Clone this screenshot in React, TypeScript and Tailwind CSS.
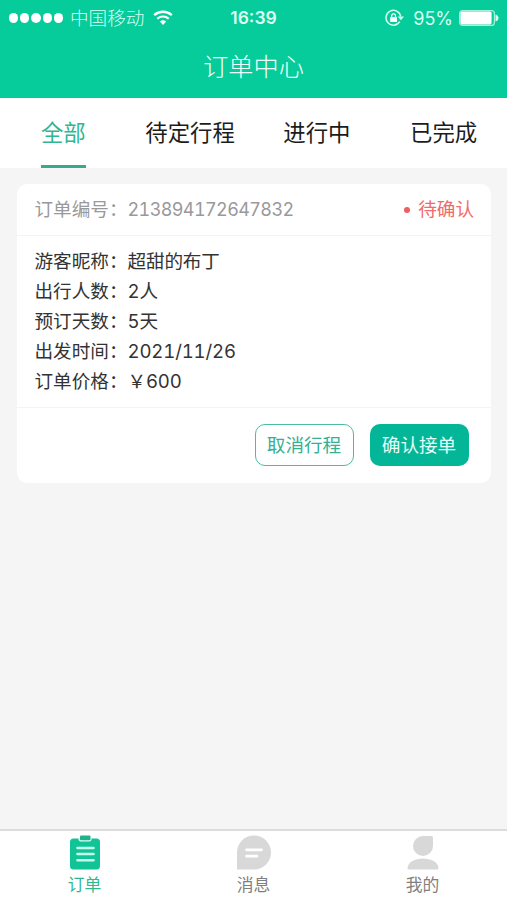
import clsx from "clsx";

const tabs = ["全部", "待定行程", "进行中", "已完成"];

const details = [
  { label: "游客昵称", value: "超甜的布丁" },
  { label: "出行人数", value: "2人" },
  { label: "预订天数", value: "5天" },
  { label: "出发时间", value: "2021/11/26" },
  { label: "订单价格", value: "￥600" },
];

function StatusBar() {
  return (
    <div className="grid h-9 grid-cols-3 items-center text-[#d9fff2]">
      <div className="flex items-center pl-[9px]">
        <div className="flex gap-[2px]">
          {[0, 1, 2, 3, 4].map((i) => (
            <span key={i} className="size-[9.2px] rounded-full bg-white" />
          ))}
        </div>
        <span className="ml-[7px] text-[18.6px] leading-9 font-light whitespace-nowrap">
          中国移动
        </span>
        <svg className="ml-[9px] shrink-0" width="20" height="16" viewBox="0 0 20 16" fill="none">
          <path d="M1.2 5.2a13 13 0 0 1 17.6 0" stroke="white" strokeWidth="2.3" />
          <path d="M4.3 8.7a8.5 8.5 0 0 1 11.4 0" stroke="white" strokeWidth="2.2" />
          <path d="M6.8 11.6a4.8 4.8 0 0 1 6.4 0L10 15z" fill="white" />
        </svg>
      </div>
      <div className="text-center text-[17.5px] font-semibold">16:39</div>
      <div className="flex items-center justify-end pr-[8px]">
        <svg width="19" height="18" viewBox="0 0 19 18" fill="none">
          <path d="M14.7 12.7A7.4 7.4 0 1 1 15.7 7.4" stroke="currentColor" strokeWidth="1.5" />
          <path d="M12.7 7.6H19l-3.1 3.7z" fill="currentColor" />
          <rect x="5.2" y="8" width="6.8" height="5" rx=".6" fill="white" />
          <path d="M6.7 8.2V6.7a1.9 1.9 0 0 1 3.8 0v1.5" stroke="white" strokeWidth="1.2" />
        </svg>
        <span className="ml-[9px] text-[18px]">95%</span>
        <svg className="ml-[6px]" width="40" height="16" viewBox="0 0 40 16" fill="none">
          <rect x=".6" y=".6" width="34.8" height="14.8" rx="3" stroke="#a5f0d8" strokeWidth="1.2" />
          <rect x="1.4" y="1.6" width="31.2" height="12.8" rx="1.6" fill="white" />
          <path d="M36.5 4.5c4 1 4 6 0 7z" fill="#d9fff2" />
        </svg>
      </div>
    </div>
  );
}

function Tabs() {
  return (
    <nav className="grid h-[70px] grid-cols-4 bg-white text-[22.4px] text-[#1c1c1c]">
      {tabs.map((tab, i) => (
        <button
          key={tab}
          className={clsx(
            "justify-self-center border-b-[3px] pt-[3px] whitespace-nowrap",
            i === 0 ? "border-[#35ab8b] text-[#2fb692]" : "border-transparent",
          )}
        >
          {tab}
        </button>
      ))}
    </nav>
  );
}

function OrderCard() {
  return (
    <section className="mt-4 mr-[16.5px] ml-[17px] h-[299px] rounded-[10px] bg-white text-[18.6px]">
      <header className="flex h-[52px] items-center justify-between border-b border-[#f4f4f4] pt-[2px] pr-[16.5px] pl-[17.5px] text-[#999]">
        <p className="flex items-baseline">
          <span>订单编号：</span>
          <span className="text-[18px] tracking-[-0.6px] tabular-nums">
            213894172647832
          </span>
        </p>
        <p className="flex items-center gap-[8px] text-[#ef6b6b]">
          <span className="size-[6.5px] rounded-full bg-[#ee5d60]" />
          待确认
        </p>
      </header>
      <dl className="h-[172px] border-b border-[#f4f4f4] pt-[10px] pl-[17.5px] leading-[30px] text-[#333] tabular-nums">
        {details.map(({ label, value }) => (
          <div key={label} className="flex">
            <dt>{label}：</dt>
            <dd className="tracking-[-0.15px]">{value}</dd>
          </div>
        ))}
      </dl>
      <footer className="flex justify-end gap-[16px] pt-[16px] pr-[22px]">
        <button className="h-[42px] w-[99px] rounded-[10px] border border-[#4cbca1] pt-[2px] text-[#35b095]">
          取消行程
        </button>
        <button className="h-[42px] w-[99px] rounded-[10px] bg-[#04b698] pt-[2px] text-[#e5fff9]">
          确认接单
        </button>
      </footer>
    </section>
  );
}

function OrderIcon() {
  return (
    <svg width="32" height="36" viewBox="0 0 32 36" fill="none">
      <rect x="1" y="3.5" width="30" height="31" rx="3.5" fill="#10c496" />
      <path d="M9.5 3h13v1.5a2 2 0 0 1-2 2h-9a2 2 0 0 1-2-2z" fill="#d9fff2" />
      <rect x="11" y=".5" width="10.5" height="4.7" rx="1" fill="#1fb38d" />
      <path d="M8.5 13h16M8.5 19h16M8.5 25.2h16" stroke="#c9fff0" strokeWidth="2.6" strokeLinecap="round" />
    </svg>
  );
}

function MessageIcon() {
  return (
    <svg width="34" height="36" viewBox="0 0 34 36" fill="none">
      <path d="M0 34.5v-17A17 17 0 1 1 17 34.5z" fill="#d8d8d8" />
      <path d="M9.5 14.8h15M9.5 21.2H20" stroke="white" strokeWidth="2.7" strokeLinecap="round" />
    </svg>
  );
}

function ProfileIcon() {
  return (
    <svg width="32" height="36" viewBox="0 0 32 36" fill="#d8d8d8">
      <path d="M16 1h8.5q1.5 0 1.5 1.5V11a10 10 0 1 1-10-10z" />
      <path d="M.5 33C1 27 8 23.5 16 23.5S31 27 31.5 33q0 1.5-1.5 1.5H2Q.5 34.5.5 33z" />
    </svg>
  );
}

const navItems = [
  { label: "订单", icon: <OrderIcon />, active: true },
  { label: "消息", icon: <MessageIcon />, active: false },
  { label: "我的", icon: <ProfileIcon />, active: false },
];

export default function App() {
  return (
    <div
      lang="zh-CN"
      className="flex h-[900px] w-[507px] flex-col bg-[#f5f5f5] font-['Inter','Noto_Sans_CJK_SC',sans-serif]"
    >
      <header className="h-[97.5px] bg-[#05cc9a]">
        <StatusBar />
        <h1 className="h-[61px] text-center text-[25.2px] leading-[63px] font-light text-[#f0fffb]">
          订单中心
        </h1>
      </header>
      <Tabs />
      <main className="flex-1">
        <OrderCard />
      </main>
      <nav className="grid h-[71px] grid-cols-3 border-t-2 border-[#dcdcdc] bg-white">
        {navItems.map(({ label, icon, active }) => (
          <button key={label} className="flex flex-col items-center pt-[4px]">
            {icon}
            <span
              className={clsx(
                "mt-[2px] text-[16.8px] leading-[24px]",
                active ? "text-[#2cb992]" : "text-[#808080]",
              )}
            >
              {label}
            </span>
          </button>
        ))}
      </nav>
    </div>
  );
}
